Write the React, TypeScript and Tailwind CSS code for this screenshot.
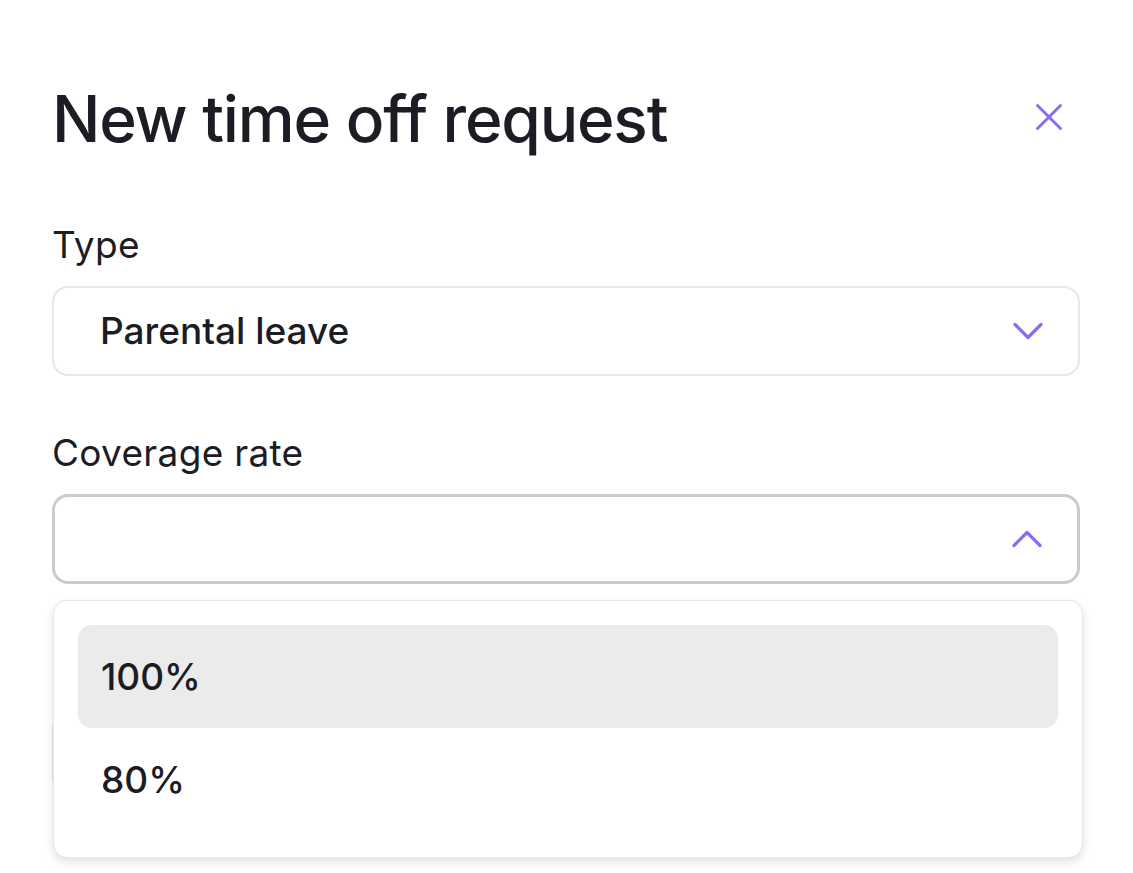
import { X, ChevronDown, ChevronUp } from 'lucide-react';

const options = ['100%', '80%'];

export default function App() {
  return (
    <div
      className="min-h-screen w-full bg-white text-[#1c1c24]"
      style={{ fontFamily: 'Inter, "Noto Sans", sans-serif' }}
    >
      <div className="pl-[52px] pr-[53px] pt-[87px]">
        <div className="flex items-start justify-between">
          <h1 className="text-[64px] leading-[64px] font-medium tracking-[-1.2px]">New time off request</h1>
          <button className="mt-[7px] mr-[8px] text-[#8b6cf0]">
            <X className="w-[46px] h-[46px]" strokeWidth={1.5} />
          </button>
        </div>

        <label className="block mt-[74px] text-[37px] leading-[40px] tracking-[0.3px]">Type</label>
        <div className="mt-[21px] h-[90px] w-full rounded-[16px] border-2 border-[#e6e6eb] flex items-center justify-between pl-[46px] pr-[24px]">
          <span className="text-[37px] font-medium">Parental leave</span>
          <ChevronDown className="w-[52px] h-[52px] text-[#8b6cf0]" strokeWidth={1.5} />
        </div>

        <label className="block mt-[57px] text-[37px] leading-[40px] tracking-[0.3px]">Coverage rate</label>
        <div className="relative mt-[21px]">
          <div className="h-[90px] w-full rounded-[16px] border-[3px] border-[#cbcbcf] flex items-center justify-end pr-[24px]">
            <ChevronUp className="w-[52px] h-[52px] text-[#8b6cf0]" strokeWidth={1.5} />
          </div>

          <div className="mt-[130px] h-[80px] w-full rounded-[16px] border-2 border-[#e3e3e8]" />

          <div className="absolute left-[1px] right-[-3px] top-[106px] rounded-[14px] border border-[#e6e6eb] bg-white shadow-[0_4px_10px_rgba(0,0,0,0.12)] px-[24px] pt-[24px] pb-[26px]">
            {options.map((o, i) => (
              <div
                key={o}
                className={
                  'h-[103px] rounded-[14px] flex items-center pl-[23px] text-[37px] font-medium ' +
                  (i === 0 ? 'bg-[#ebebec]' : '')
                }
              >
                {o}
              </div>
            ))}
          </div>
        </div>
      </div>
    </div>
  );
}
